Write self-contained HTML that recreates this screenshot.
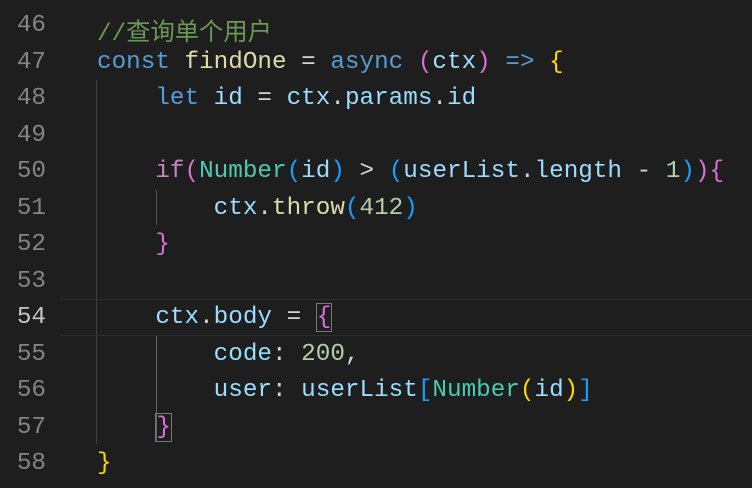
<!DOCTYPE html>
<html><head><meta charset="utf-8"><style>
html,body{margin:0;padding:0;background:#1e1e1e;width:752px;height:488px;overflow:hidden}
.wrap{position:relative;width:752px;height:488px;font-family:"Liberation Mono","Noto Sans CJK SC",monospace;font-size:24.3px}
.ln{position:absolute;left:0;width:46px;text-align:right;color:#858585}
.ln.cur{color:#c6c6c6}
.c{position:absolute;left:97px;white-space:pre;color:#d4d4d4}
.k{color:#569cd6}.v{color:#9cdcfe}.f{color:#dcdcaa}.cm{color:#6a9955}.n{color:#b5cea8}.t{color:#4ec9b0}.p{color:#c586c0}
.b1{color:#ffd700}.b2{color:#da70d6}.b3{color:#179fff}
.g{position:absolute;width:1px;background:#404040}
.cl{position:absolute;left:60px;right:0;top:299px;height:35px;border-top:1px solid #2e2e2e;border-bottom:1px solid #2e2e2e}
.box{border:1px solid #777}
.t0{position:absolute;top:4px;left:0;right:0;bottom:0}
</style></head><body><div class="wrap">
<div class="cl"></div>
<div class="g" style="left:96px;top:80px;height:364px"></div>
<div class="g" style="left:156px;top:190px;height:35px;background:#555"></div>
<div class="g" style="left:156px;top:336px;height:105px;background:#666"></div>
<div class="t0">
<div class="ln" style="top:8px">46</div><div class="c cm" style="top:8px">//查询单个用户</div>
<div class="ln" style="top:45px">47</div><div class="c" style="top:45px"><span class="k">const</span> <span class="f">findOne</span> = <span class="k">async</span> <span class="b2">(</span><span class="v">ctx</span><span class="b2">)</span> <span class="k">=&gt;</span> <span class="b1">{</span></div>
<div class="ln" style="top:81px">48</div><div class="c" style="top:81px">    <span class="k">let</span> <span class="v">id</span> = <span class="v">ctx</span>.<span class="v">params</span>.<span class="v">id</span></div>
<div class="ln" style="top:118px">49</div>
<div class="ln" style="top:154px">50</div><div class="c" style="top:154px">    <span class="p">if</span><span class="b2">(</span><span class="t">Number</span><span class="b3">(</span><span class="v">id</span><span class="b3">)</span> &gt; <span class="b3">(</span><span class="v">userList</span>.<span class="v">length</span> - <span class="n">1</span><span class="b3">)</span><span class="b2">)</span><span class="b2">{</span></div>
<div class="ln" style="top:191px">51</div><div class="c" style="top:191px">        <span class="v">ctx</span>.<span class="f">throw</span><span class="b3">(</span><span class="n">412</span><span class="b3">)</span></div>
<div class="ln" style="top:227px">52</div><div class="c" style="top:227px">    <span class="b2">}</span></div>
<div class="ln" style="top:264px">53</div>
<div class="ln cur" style="top:300px">54</div><div class="c" style="top:300px">    <span class="v">ctx</span>.<span class="v">body</span> = <span class="b2 box">{</span></div>
<div class="ln" style="top:337px">55</div><div class="c" style="top:337px">        <span class="v">code</span>: <span class="n">200</span>,</div>
<div class="ln" style="top:373px">56</div><div class="c" style="top:373px">        <span class="v">user</span>: <span class="v">userList</span><span class="b3">[</span><span class="t">Number</span><span class="b1">(</span><span class="v">id</span><span class="b1">)</span><span class="b3">]</span></div>
<div class="ln" style="top:410px">57</div><div class="c" style="top:410px">    <span class="b2 box">}</span></div>
<div class="ln" style="top:446px">58</div><div class="c" style="top:446px"><span class="b1">}</span></div>
</div>
</div></body></html>
